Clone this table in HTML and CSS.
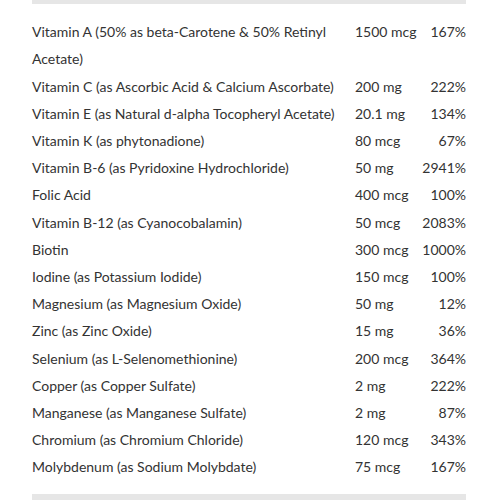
FILE: index.html
```html
<!DOCTYPE html>
<html>
<head>
<meta charset="utf-8">
<link rel="stylesheet" href="styles.css">
</head>
<body>
<div class="panel">
  <div class="bar"></div>
  <div class="facts">
    <div class="name">Vitamin A (50% as beta-Carotene &amp; 50% Retinyl Acetate)</div><div class="amt">1500 mcg</div><div class="dv">167%</div>
    <div class="name">Vitamin C (as Ascorbic Acid &amp; Calcium Ascorbate)</div><div class="amt">200 mg</div><div class="dv">222%</div>
    <div class="name">Vitamin E (as Natural d-alpha Tocopheryl Acetate)</div><div class="amt">20.1 mg</div><div class="dv">134%</div>
    <div class="name">Vitamin K (as phytonadione)</div><div class="amt">80 mcg</div><div class="dv">67%</div>
    <div class="name">Vitamin B-6 (as Pyridoxine Hydrochloride)</div><div class="amt">50 mg</div><div class="dv">2941%</div>
    <div class="name">Folic Acid</div><div class="amt">400 mcg</div><div class="dv">100%</div>
    <div class="name">Vitamin B-12 (as Cyanocobalamin)</div><div class="amt">50 mcg</div><div class="dv">2083%</div>
    <div class="name">Biotin</div><div class="amt">300 mcg</div><div class="dv">1000%</div>
    <div class="name">Iodine (as Potassium Iodide)</div><div class="amt">150 mcg</div><div class="dv">100%</div>
    <div class="name">Magnesium (as Magnesium Oxide)</div><div class="amt">50 mg</div><div class="dv">12%</div>
    <div class="name">Zinc (as Zinc Oxide)</div><div class="amt">15 mg</div><div class="dv">36%</div>
    <div class="name">Selenium (as L-Selenomethionine)</div><div class="amt">200 mcg</div><div class="dv">364%</div>
    <div class="name">Copper (as Copper Sulfate)</div><div class="amt">2 mg</div><div class="dv">222%</div>
    <div class="name">Manganese (as Manganese Sulfate)</div><div class="amt">2 mg</div><div class="dv">87%</div>
    <div class="name">Chromium (as Chromium Chloride)</div><div class="amt">120 mcg</div><div class="dv">343%</div>
    <div class="name">Molybdenum (as Sodium Molybdate)</div><div class="amt">75 mcg</div><div class="dv">167%</div>
  </div>
  <div class="bar bottom"></div>
</div>
</body>
</html>
```
FILE: styles.css
```css
html, body {
  margin: 0;
  padding: 0;
  background: #ffffff;
}
body {
  font-family: Lato, "Open Sans", sans-serif;
  color: #333333;
}
.panel {
  width: 434px;
  margin-left: 32px;
  margin-top: 0;
}
.bar {
  height: 4px;
  background: #e6e6e6;
}
.bar.bottom {
  height: 8px;
}
.facts {
  display: grid;
  grid-template-columns: 323px 1fr auto;
  font-size: 14px;
  line-height: 27.2px;
  padding: 14.2px 0 13.6px;
}
.dv {
  text-align: right;
}
```
